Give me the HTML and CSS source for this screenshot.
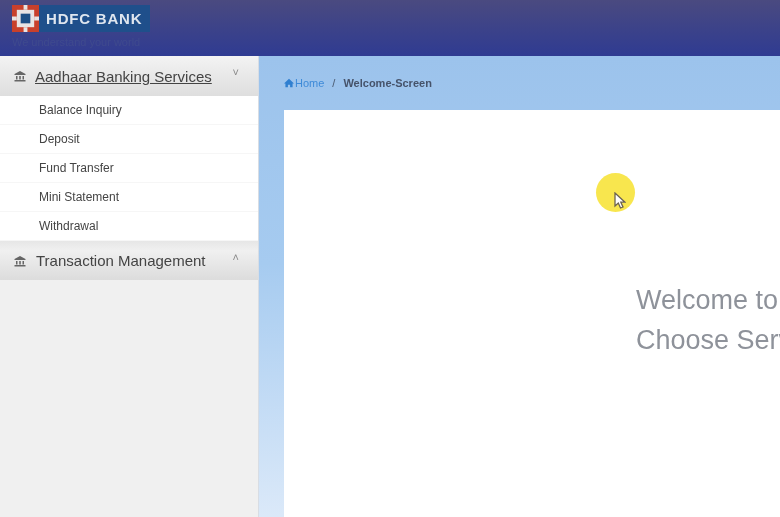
FILE: index.html
```html
<!DOCTYPE html>
<html>
<head>
  <title>HDFC Bank</title>
  <meta charset="UTF-8">
  <link rel="stylesheet" href="styles.css">
</head>
<body>
  <div class="app">
    <div class="header">
      <div class="brand">
        <div class="logo-row">
          <svg class="logo" viewBox="0 0 28 28" width="28" height="28">
            <rect width="28" height="28" fill="#c8402c"/>
            <path d="M12 0h4v5h-4zM12 23h4v5h-4zM0 12h5v4H0zM23 12h5v4h-5z" fill="#e8e4e4"/>
            <rect x="5" y="5" width="18" height="18" fill="#e8e4e4"/>
            <rect x="9" y="9" width="10" height="10" fill="#1d4f86"/>
          </svg>
          <span class="bank-name">HDFC BANK</span>
        </div>
        <div class="tagline">We understand your world</div>
      </div>
    </div>
    <div class="content">
      <div class="sidebar">
        <div class="menu-head">
          <svg class="bank-icon" viewBox="0 0 12 12" width="12" height="12"><path d="M6 1 L11.5 4 V5 H.5 V4Z M2 6h1.5v3.5H2z M5.2 6h1.6v3.5H5.2z M8.500 6H10v3.500H8.500z M.5 10h11v1.500H.5z" fill="#666"/></svg>
          <span class="menu-title active">Aadhaar Banking Services</span>
          <span class="chev">˅</span>
        </div>
        <ul class="submenu">
          <li>Balance Inquiry</li>
          <li>Deposit</li>
          <li>Fund Transfer</li>
          <li>Mini Statement</li>
          <li>Withdrawal</li>
        </ul>
        <div class="menu-head second">
          <svg class="bank-icon" viewBox="0 0 12 12" width="12" height="12"><path d="M6 1 L11.5 4 V5 H.5 V4Z M2 6h1.5v3.5H2z M5.2 6h1.6v3.5H5.2z M8.500 6H10v3.500H8.500z M.5 10h11v1.500H.5z" fill="#666"/></svg>
          <span class="menu-title">Transaction Management</span>
          <span class="chev">˄</span>
        </div>
      </div>
      <div class="main">
        <div class="breadcrumb">
          <svg class="home-icon" viewBox="0 0 12 12" width="10" height="10"><path d="M6 1 L12 6.500 H10.300 V11 H7.300 V8 H4.700 V11 H1.700 V6.500 H0Z" fill="#2f7fd0"/></svg>
          <span class="crumb-link">Home</span>
          <span class="crumb-sep">/</span>
          <span class="crumb-current">Welcome-Screen</span>
        </div>
        <div class="card">
          <p class="welcome">Welcome to Aadhaar Banking</p>
          <p class="welcome">Choose Service from the menu</p>
        </div>
      </div>
    </div>
    <div class="cursor-spot">
      <svg viewBox="0 0 12 18" width="12" height="18"><path d="M1 1 V14 L4.300 11 L6.500 16 L9 15 L6.800 10.200 H11Z" fill="#fff" stroke="#6b6250" stroke-width="1.300"/></svg>
    </div>
  </div>
</body>
</html>
```
FILE: styles.css
```css
html, body {
  margin: 0;
  height: 100%;
  overflow: hidden;
}
body {
  font-family: "Liberation Sans", Arial, sans-serif;
  background-color: #fff;
}
.app {
  position: relative;
  width: 780px;
  height: 517px;
  overflow: hidden;
  filter: blur(0.5px);
}
.header {
  height: 56px;
  background: linear-gradient(to bottom, #4a4a80, #2f3b92);
  padding: 5px 0 0 12px;
  box-sizing: border-box;
}
.logo-row {
  display: flex;
  align-items: center;
}
.logo {
  display: block;
  width: 27px;
  height: 27px;
}
.bank-name {
  display: block;
  height: 27px;
  line-height: 27px;
  padding: 0 8px 0 7px;
  background-color: #1f4f8b;
  color: #dfe6ef;
  font-size: 15px;
  font-weight: bold;
  letter-spacing: 0.8px;
}
.tagline {
  margin-top: 4px;
  font-size: 11px;
  color: #3f4a8e;
}
.content {
  display: flex;
  height: 461px;
}
.sidebar {
  width: 258px;
  flex-shrink: 0;
  background-color: #f0f0f0;
  border-right: 1px solid #d8dde4;
}
.menu-head {
  display: flex;
  align-items: center;
  height: 40px;
  padding: 0 14px;
  box-sizing: border-box;
  background: linear-gradient(to bottom, #f3f3f3, #dedede);
}
.menu-head.second {
  background: linear-gradient(to bottom, #e6e6e6, #f0f0f0 25%, #dcdcdc);
  height: 39px;
}
.bank-icon {
  flex-shrink: 0;
}
.menu-title {
  margin-left: 10px;
  font-size: 15px;
  color: #444;
  white-space: nowrap;
  flex: 1;
}
.menu-title.active {
  margin-left: 9px;
  flex: none;
  text-decoration: underline;
}
.chev {
  margin-left: auto;
  margin-right: 5px;
  margin-top: -8px;
  font-size: 11px;
  color: #888;
}
.submenu {
  list-style: none;
  margin: 0;
  padding: 0;
  background-color: #fff;
}
.submenu li {
  height: 29px;
  line-height: 29px;
  padding-left: 39px;
  font-size: 12px;
  color: #444;
  border-bottom: 1px solid #f6f6f6;
  box-sizing: border-box;
}
.main {
  flex: 1;
  display: flex;
  flex-direction: column;
  min-width: 0;
  padding-left: 25px;
  background: linear-gradient(to bottom, #9cc3ec, #a6cbf0 45%, #dbe9f9);
}
.breadcrumb {
  display: flex;
  align-items: center;
  height: 54px;
  flex-shrink: 0;
  font-size: 11px;
}
.home-icon {
  margin-right: 1px;
}
.crumb-link {
  color: #3d8ad8;
}
.crumb-sep {
  margin: 0 8px;
  color: #4a5a70;
}
.crumb-current {
  color: #46536a;
  font-weight: bold;
}
.card {
  flex: 1;
  background-color: #fff;
  padding-top: 175px;
  padding-left: 352px;
  white-space: nowrap;
  overflow: hidden;
}
.welcome {
  margin: 0 0 9px;
  height: 31px;
  line-height: 31px;
  font-size: 27px;
  color: #8e929a;
}
.cursor-spot {
  position: absolute;
  left: 596px;
  top: 173px;
  width: 39px;
  height: 39px;
  border-radius: 50%;
  background-color: #f8e64e;
}
.cursor-spot svg {
  position: absolute;
  left: 18px;
  top: 19px;
}
```
